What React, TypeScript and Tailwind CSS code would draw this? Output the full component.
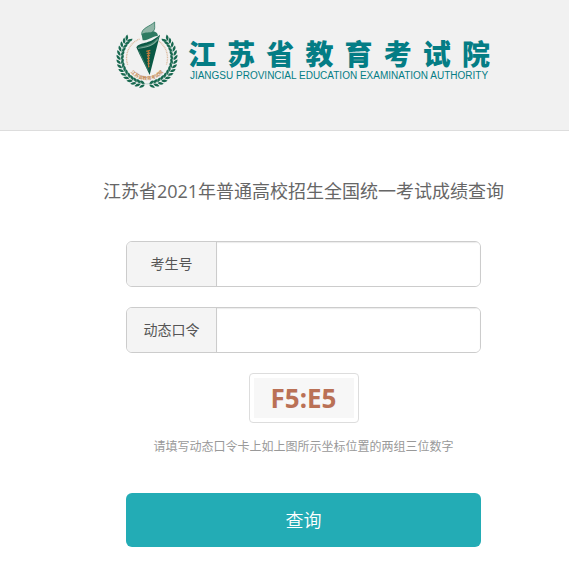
import { useState } from 'react';
import type { FormEvent } from 'react';

const NAME = '江苏省教育考试院';

// one side of the wreath, in degrees measured clockwise from the bottom
const LEAVES = [7, 16, 25, 34, 43, 52, 61, 70, 79, 88, 97, 106, 115, 124, 132];

function WreathSide() {
  return (
    <>
      {LEAVES.map(a => (
        <g key={a} transform={`rotate(${a} 108 132)`} fill="#17684f">
          <path d="M111 213 Q101 210 95 223 Q107 225 111 213Z" />
          <path d="M111 211 Q102 213 94 203 Q105 197 111 211Z" />
        </g>
      ))}
      <path d="M108 210 A78 78 0 0 1 48 82" fill="none" stroke="#5c9683" strokeWidth="1" />
    </>
  );
}

function Emblem() {
  return (
    <svg viewBox="0 0 225 240" className="h-20 w-[75px] shrink-0" aria-hidden="true">
      <WreathSide />
      <g transform="translate(216 0) scale(-1 1)"><WreathSide /></g>

      {/* inner ring with the name */}
      <path d="M50 152 A61 61 0 0 1 86 75" fill="none" stroke="#dcbb9f" strokeWidth="4" strokeDasharray="3 2" />
      <path d="M144 82 A61 61 0 0 1 166 152" fill="none" stroke="#dcbb9f" strokeWidth="4" strokeDasharray="3 2" />
      <path id="ring" d="M44 132 A64 66 0 0 0 172 132" fill="none" />
      <text fontSize="14" fontWeight="700" fill="#c58a55" fontFamily="Noto Sans CJK SC, sans-serif" textAnchor="middle">
        <textPath href="#ring" startOffset="50%">{NAME}</textPath>
      </text>

      {/* torch */}
      <path d="M92 62 C90 42 116 38 131 24 C130 38 134 44 127 52 C116 62 104 53 92 62Z" fill="#8fb5a6" stroke="#17684f" strokeWidth="2" />
      <path d="M92 62 C102 52 116 60 127 52 C136 54 142 60 140 66 C128 64 112 80 95 79Z" fill="#2f7a62" />
      <path d="M76 100 C86 82 112 94 147 62 L116 183 C106 160 88 128 76 100Z" fill="#0a5845" />
      <path d="M76 100 C98 94 122 96 147 62 C136 102 104 99 76 100Z" fill="#3d7f69" />
      <path d="M81 103 C102 100 124 98 141 76" fill="none" stroke="#b9d0c6" strokeWidth="2" />
      <path d="M83 110 L112 170" stroke="#4d8b76" strokeWidth="2" />
      <g stroke="#c47b3d" strokeWidth="4">
        <path d="M106 112 L118 109 M107 119 L118 117 M108 126 L117 124 M108 134 L116 132 M109 142 L116 140 M110 150 L116 148 M111 158 L115 157" />
        <path d="M112 110 L113 160" strokeWidth="3" />
      </g>
    </svg>
  );
}

function Field({ id, label, value, onChange }: {
  id: string; label: string; value: string; onChange: (v: string) => void;
}) {
  return (
    <div className="flex h-[46px] overflow-hidden rounded-md border border-[#ccc]">
      <label htmlFor={id} className="flex w-[90px] shrink-0 items-center justify-center border-r border-[#ccc] bg-[#f4f4f4] text-sm text-[#555]">
        {label}
      </label>
      <input
        id={id}
        type="text"
        value={value}
        onChange={e => onChange(e.target.value)}
        className="min-w-0 flex-1 bg-white px-4 text-sm text-[#555] shadow-[inset_0_1px_1px_rgba(0,0,0,0.08)] outline-none"
      />
    </div>
  );
}

export default function App() {
  const [examNo, setExamNo] = useState('');
  const [token, setToken] = useState('');

  const submit = (e: FormEvent) => e.preventDefault();

  return (
    <div className="min-h-screen bg-white font-['Open_Sans','Noto_Sans_CJK_SC',sans-serif]">
      <header className="flex h-[131px] justify-center border-b border-[#ddd] bg-[#f1f1f1] pl-[34px] pt-[14px]">
        <Emblem />
        <div className="w-[306px] pt-[23px] text-[#047d85]">
          <h1 className="flex justify-between px-0.5 font-['Noto_Sans_CJK_SC',sans-serif] text-[28px] leading-8 font-black">
            {[...NAME].map(c => <span key={c}>{c}</span>)}
          </h1>
          <p className="whitespace-nowrap text-center font-['Liberation_Sans',sans-serif] text-[10px] leading-[14px]">
            JIANGSU PROVINCIAL EDUCATION EXAMINATION AUTHORITY
          </p>
        </div>
      </header>

      <main className="flex flex-col items-center pl-[38px] pt-[46px]">
        <h2 className="whitespace-nowrap text-lg leading-7 font-normal text-[#666]">
          江苏省2021年普通高校招生全国统一考试成绩查询
        </h2>

        <form onSubmit={submit} className="mt-9 w-full max-w-[355px]">
          <div className="space-y-5">
            <Field id="exam-no" label="考生号" value={examNo} onChange={setExamNo} />
            <Field id="token" label="动态口令" value={token} onChange={setToken} />
          </div>

          <div className="mx-auto mt-5 w-[110px] rounded border border-[#ddd] bg-white p-1">
            <div className="flex h-10 items-center justify-center bg-[#f7f7f7] font-['Noto_Sans',sans-serif] text-[26px] font-bold text-[#ba7156]">
              F5:E5
            </div>
          </div>

          <p className="mt-3 whitespace-nowrap text-center text-xs leading-6 text-[#999]">
            请填写动态口令卡上如上图所示坐标位置的两组三位数字
          </p>

          <button type="submit" className="mt-[34px] h-[54px] w-full rounded-md bg-[#23acb5] text-lg font-[350] text-white">
            查询
          </button>
        </form>
      </main>
    </div>
  );
}
